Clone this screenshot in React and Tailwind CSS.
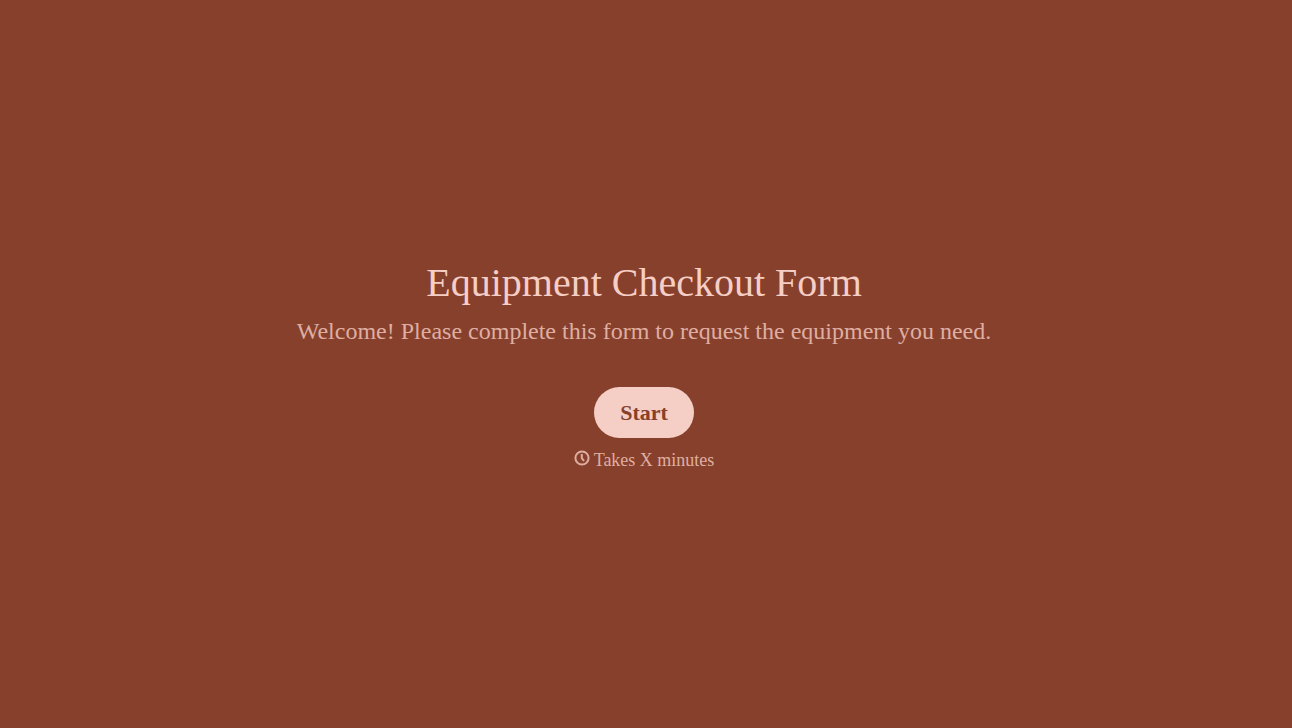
function ClockIcon() {
  return (
    <svg className="mb-1 h-4 w-4 shrink-0" viewBox="0 0 16 16" fill="none" stroke="currentColor" aria-hidden="true">
      <circle cx="8" cy="8" r="6.6" strokeWidth="2" />
      <path d="M7.8 4v4.2L10 11" strokeWidth="2" />
    </svg>
  );
}

export default function App() {
  return (
    <main className="flex min-h-screen flex-col items-center justify-center bg-[#87402c] pr-7 pl-6 text-center font-['Liberation_Serif',serif] text-[#dfaea2]">
      <h1 className="text-[40px] leading-[56px] text-[#f5cec6]">Equipment Checkout Form</h1>
      <p className="mt-1 text-2xl">Welcome! Please complete this form to request the equipment you need.</p>
      <button
        type="button"
        className="mt-10 h-[51px] w-[100px] rounded-full bg-[#f5cec6] text-[22px] font-bold text-[#87402c]"
      >
        Start
      </button>
      <div className="mt-2 flex items-center gap-1 text-lg">
        <ClockIcon />
        <span>Takes X minutes</span>
      </div>
    </main>
  );
}
